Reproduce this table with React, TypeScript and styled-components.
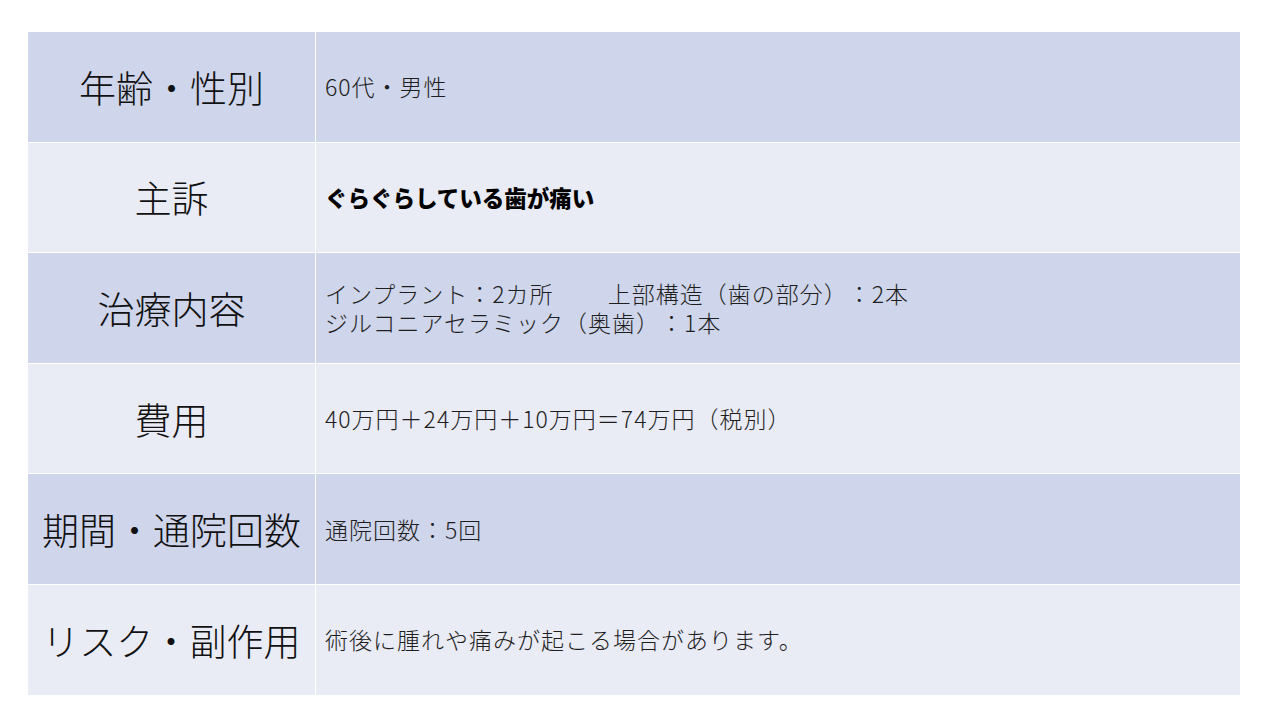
import styled, { createGlobalStyle } from "styled-components";

const GlobalStyle = createGlobalStyle`
  html, body {
    margin: 0;
    padding: 0;
    background: #ffffff;
  }

  body {
    font-family: "Noto Sans CJK JP", "Noto Sans", sans-serif;
  }
`;

const Page = styled.div`
  width: 1280px;
  height: 720px;
  padding: 32px 40px 0 28px;
  box-sizing: border-box;
`;

const Table = styled.div`
  display: grid;
  grid-template-columns: 287px 1fr;
  grid-auto-rows: 109.6px;
  column-gap: 1px;
  row-gap: 1px;
  width: 1212px;
  background-color: #ffffff;
`;

const Label = styled.div<{ $alt: boolean }>`
  display: flex;
  align-items: center;
  justify-content: center;

  background-color: ${(p) => (p.$alt ? "#e9ebf5" : "#cfd5ea")};

  font-size: 37px;
  font-weight: 300;
  color: #111111;
  white-space: nowrap;
  text-spacing-trim: space-all;
`;

const Value = styled.div<{ $alt: boolean; $bold?: boolean }>`
  display: flex;
  flex-direction: column;
  justify-content: center;

  background-color: ${(p) => (p.$alt ? "#e9ebf5" : "#cfd5ea")};
  padding: 0 0 0 9px;

  font-size: ${(p) => (p.$bold ? "22.5px" : "23px")};
  font-weight: ${(p) => (p.$bold ? 900 : 300)};
  letter-spacing: ${(p) => (p.$bold ? "0" : "1px")};
  color: ${(p) => (p.$bold ? "#000000" : "#1e1e1e")};
  white-space: pre;
  text-spacing-trim: space-all;
`;

const Line = styled.span`
  display: block;
  height: 29px;
  line-height: 29px;
`;

const rows: { label: string; value: string[]; bold?: boolean }[] = [
  { label: "年齢・性別", value: ["60代・男性"] },
  { label: "主訴", value: ["ぐらぐらしている歯が痛い"], bold: true },
  {
    label: "治療内容",
    value: [
      "インプラント：2カ所　　 上部構造（歯の部分）：2本",
      "ジルコニアセラミック（奥歯）：1本",
    ],
  },
  { label: "費用", value: ["40万円＋24万円＋10万円＝74万円（税別）"] },
  { label: "期間・通院回数", value: ["通院回数：5回"] },
  { label: "リスク・副作用", value: ["術後に腫れや痛みが起こる場合があります。"] },
];

const App: React.FC = () => {
  return (
    <>
      <GlobalStyle />
      <Page>
        <Table>
          {rows.map((row, i) => (
            <>
              <Label key={`l${i}`} $alt={i % 2 === 1}>
                {row.label}
              </Label>
              <Value key={`v${i}`} $alt={i % 2 === 1} $bold={row.bold}>
                {row.value.map((line) => (
                  <Line key={line}>{line}</Line>
                ))}
              </Value>
            </>
          ))}
        </Table>
      </Page>
    </>
  );
};

export default App;
